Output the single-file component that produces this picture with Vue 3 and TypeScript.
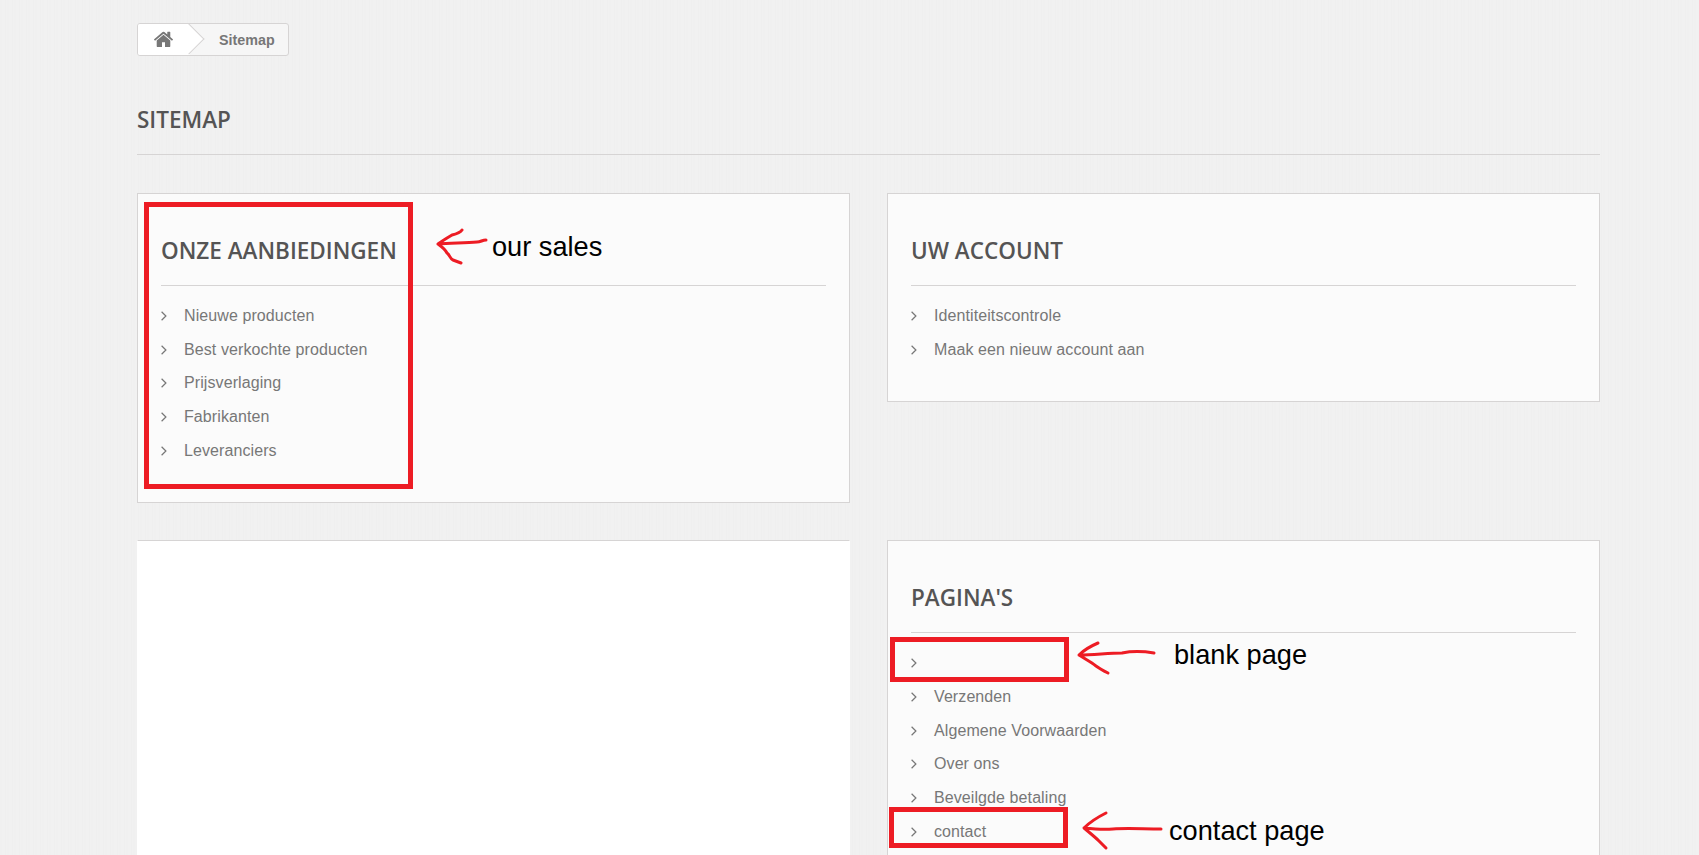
<script setup lang="ts">
interface Section {
  title: string;
  links: string[];
}

const topSections: Section[] = [
  { title: "ONZE AANBIEDINGEN", links: ["Nieuwe producten", "Best verkochte producten", "Prijsverlaging", "Fabrikanten", "Leveranciers"] },
  { title: "UW ACCOUNT", links: ["Identiteitscontrole", "Maak een nieuw account aan"] },
];
const pages: Section = {
  title: "PAGINA'S",
  links: ["", "Verzenden", "Algemene Voorwaarden", "Over ons", "Beveilgde betaling", "contact"],
};
</script>

<template>
  <div class="page">
    <div class="wrap">
      <nav class="crumb">
        <a class="crumb__home" aria-label="Home">
          <svg width="19" height="16" viewBox="90 190 1612 1352"><path fill="#777" d="M1472 992v480q0 26-19 45t-45 19h-384v-384h-256v384h-384q-26 0-45-19t-19-45v-480q0-1 .5-3t.5-3l575-474 575 474q1 2 1 6zm223-69l-62 74q-8 9-21 11h-3q-13 0-21-7l-692-577-692 577q-12 8-24 7-13-2-21-11l-62-74q-8-10-7-23.500t11-21.500l719-599q32-26 76-26t76 26l244 204v-195q0-14 9-23t23-9h192q14 0 23 9t9 23v408l219 182q10 8 11 21.500t-7 23.500z"/></svg>
        </a>
        <span class="crumb__label">Sitemap</span>
      </nav>

      <h1 class="title">SITEMAP</h1>

      <div class="grid">
        <section v-for="s in topSections" :key="s.title" class="card">
          <h2 class="card__title">{{ s.title }}</h2>
          <ul class="links">
            <li v-for="l in s.links" :key="l">
              <svg class="chev" width="6" height="10" viewBox="0 0 6 10"><path d="M.6.8L4.9 5 .6 9.200" fill="none" stroke="#777" stroke-width="1.2"/></svg>
              <a>{{ l }}</a>
            </li>
          </ul>
        </section>
        <section class="card card--blank"></section>
        <section class="card">
          <h2 class="card__title">{{ pages.title }}</h2>
          <ul class="links">
            <li v-for="l in pages.links" :key="l">
              <svg class="chev" width="6" height="10" viewBox="0 0 6 10"><path d="M.6.8L4.9 5 .6 9.200" fill="none" stroke="#777" stroke-width="1.2"/></svg>
              <a>{{ l }}</a>
            </li>
          </ul>
        </section>
      </div>
    </div>

    <!-- hand drawn annotations on top of the screenshot -->
    <svg class="marks" width="1699" height="855" viewBox="0 0 1699 855">
      <g fill="none" stroke="#ed1c24" stroke-width="5">
        <rect x="146.500" y="204.500" width="264" height="282"/>
        <rect x="892.500" y="639.500" width="174" height="40"/>
        <rect x="891.500" y="809.500" width="174" height="36"/>
      </g>
      <g fill="none" stroke="#ed1c24" stroke-width="3" stroke-linecap="round" stroke-linejoin="round">
        <path d="M486 240c-4 0-5 2-9 2-12 1-27 1-39 2M462 230c-2 3-6 4-10 5-5 3-10 6-14 9 4 3 7 5 9 9 3 2 3 6 6 7l8 3"/>
        <path d="M1154 653c-12-2-22-2-32 0-14 0-28 2-43 2M1098 643c-7 3-13 6-19 12 6 4 12 7 17 11 4 3 8 5 12 7"/>
        <path d="M1161 829c-18 0-34-1-48 0-10 1-20 0-29-1M1106 813c-8 4-16 9-22 15 6 5 11 9 15 13l7 7"/>
      </g>
    </svg>
    <span class="note note--sales">our sales</span>
    <span class="note note--blank">blank page</span>
    <span class="note note--contact">contact page</span>
  </div>
</template>

<style>
html, body { margin: 0; overflow: hidden; }
</style>

<style scoped>
.page {
  position: relative;
  height: 855px;
  overflow: hidden;
  background: repeating-linear-gradient(90deg, #f0f0f0 0 2px, #f1f1f1 2px 5px, #efefef 5px 6px, #f1f1f1 6px 7px);
  font-family: "Liberation Sans", Arial, sans-serif;
}
.wrap { width: 1463px; margin-left: 137px; padding-top: 23px; }

.crumb {
  position: relative;
  display: flex;
  align-items: center;
  box-sizing: border-box;
  width: 152px;
  height: 33px;
  overflow: hidden;
  border: 1px solid #d6d4d4;
  border-radius: 3px;
  background: #f6f6f6;
}
.crumb__home {
  position: relative;
  display: flex;
  align-items: center;
  box-sizing: border-box;
  width: 52px;
  height: 100%;
  padding-left: 16px;
  background: #fff;
}
.crumb__home::after {
  content: "";
  position: absolute;
  top: 4px;
  right: -10px;
  width: 22px;
  height: 22px;
  box-sizing: border-box;
  border-top: 1px solid #d6d4d4;
  border-right: 1px solid #d6d4d4;
  background: #fff;
  transform: rotate(45deg);
}
.crumb__home svg { position: relative; z-index: 1; margin-top: -1px; }
.crumb__label { margin-left: 29px; font-size: 14.300px; font-weight: 700; color: #777; }

.title {
  margin: 0;
  margin-top: 48px;
  padding-bottom: 18px;
  border-bottom: 1px solid #d6d4d4;
  font: 600 22.500px/32px "Open Sans", sans-serif;
  color: #555454;
}

.grid {
  display: grid;
  grid-template-columns: 713px 713px;
  column-gap: 37px;
  row-gap: 37px;
  align-items: start;
  margin-top: 38px;
}
.card {
  box-sizing: border-box;
  padding: 40px 23px 35px;
  border: 1px solid #d6d4d4;
  background: #fbfbfb;
}
.card--blank { align-self: stretch; border-color: #d6d4d4 transparent transparent; background: #fff; }
.card__title {
  margin: 0;
  padding-bottom: 18px;
  border-bottom: 1px solid #d6d4d4;
  font: 600 22.500px/33px "Open Sans", sans-serif;
  color: #555454;
}
.links { margin: 13px 0 0; padding: 0; list-style: none; }
.links li {
  display: flex;
  align-items: center;
  height: 33.700px;
  font-size: 16px;
  letter-spacing: .09px;
  color: #777;
}
.chev { flex: none; margin-right: 17px; }

.marks { position: absolute; top: 0; left: 0; }
.note { position: absolute; font-size: 27.200px; line-height: 32px; color: #000; white-space: nowrap; }
.note--sales { left: 492px; top: 231px; }
.note--blank { left: 1174px; top: 639px; }
.note--contact { left: 1169px; top: 815px; }
</style>
